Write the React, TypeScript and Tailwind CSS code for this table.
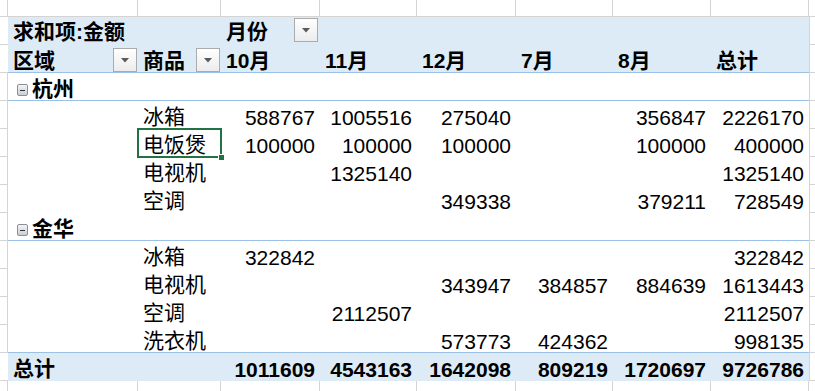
import React from "react";

const COLS = "grid grid-cols-[8px_130px_83px_99px_97px_99px_97px_98px_98px_1fr]";
const FONT = { fontFamily: '"Liberation Sans", "Noto Sans CJK SC", sans-serif' };

function DropBtn() {
  return (
    <div className="w-[24px] h-[24px] border border-[#ababab] bg-gradient-to-b from-white to-[#ececec] flex items-center justify-center shrink-0">
      <svg width="8" height="5" viewBox="0 0 8 5">
        <path d="M0 0 H8 L4 4.5 Z" fill="#595959" />
      </svg>
    </div>
  );
}

function Collapse() {
  return (
    <div className="w-[11px] h-[12px] rounded-[2px] border border-[#8a8f96] bg-gradient-to-b from-[#f4f5f7] to-[#c9ced6] flex items-center justify-center mr-[4px] mt-[11px] shrink-0">
      <div className="w-[5px] h-[1px] bg-[#333]" />
    </div>
  );
}

function Num({ v, bold }: { v: string; bold?: boolean }) {
  return (
    <div className={"h-full text-right pr-[5px] pt-[4px] leading-[26px] whitespace-nowrap " + (bold ? "font-bold" : "")}>
      {v}
    </div>
  );
}

type BodyRow = {
  kind: "region" | "item";
  label: string;
  vals?: string[];
  line?: boolean;
  selected?: boolean;
};

const body: BodyRow[] = [
  { kind: "region", label: "杭州", line: true },
  { kind: "item", label: "冰箱", vals: ["588767", "1005516", "275040", "", "356847", "2226170"] },
  { kind: "item", label: "电饭煲", vals: ["100000", "100000", "100000", "", "100000", "400000"], selected: true },
  { kind: "item", label: "电视机", vals: ["", "1325140", "", "", "", "1325140"] },
  { kind: "item", label: "空调", vals: ["", "", "349338", "", "379211", "728549"] },
  { kind: "region", label: "金华", line: true },
  { kind: "item", label: "冰箱", vals: ["322842", "", "", "", "", "322842"] },
  { kind: "item", label: "电视机", vals: ["", "", "343947", "384857", "884639", "1613443"] },
  { kind: "item", label: "空调", vals: ["", "2112507", "", "", "", "2112507"] },
  { kind: "item", label: "洗衣机", vals: ["", "", "573773", "424362", "", "998135"], line: true },
];

export default function App() {
  return (
    <div className="w-[815px] h-[391px] overflow-hidden bg-white text-[21px] text-black leading-[28px]" style={FONT}>
      {/* top grid row */}
      <div className={COLS + " grid-rows-[17px] h-[17px]"}>
        {Array.from({ length: 10 }).map((_, i) => (
          <div key={i} className={"border-b border-[#d4d4d4] " + (i < 9 ? "border-r" : "")} />
        ))}
      </div>

      {/* header row 1 */}
      <div className={COLS + " grid-rows-[28px] h-[28px]"}>
        <div className="border-b border-[#d4d4d4]" />
        <div className="col-span-2 bg-[#ddebf7] font-bold pl-[5px] pt-[2px] leading-[26px] whitespace-nowrap">求和项:金额</div>
        <div className="bg-[#ddebf7] font-bold flex items-start justify-between pl-[5px] pr-[2px] pt-[1px]">
          <span className="mt-[1px] leading-[26px]">月份</span>
          <DropBtn />
        </div>
        <div className="col-span-5 bg-[#ddebf7]" />
        <div className="border-l border-b border-[#d4d4d4]" />
      </div>

      {/* header row 2 */}
      <div className={COLS + " grid-rows-[28px] h-[28px]"}>
        <div className="border-b border-[#d4d4d4]" />
        <div className="bg-[#ddebf7] border-b border-[#9bc2e6] font-bold flex items-start justify-between pl-[5px] pr-[1px] pt-[3px]">
          <span className="mt-[1px] leading-[24px]">区域</span>
          <DropBtn />
        </div>
        <div className="bg-[#ddebf7] border-b border-[#9bc2e6] font-bold flex items-start justify-between pl-[5px] pr-[1px] pt-[3px]">
          <span className="mt-[1px] leading-[24px]">商品</span>
          <DropBtn />
        </div>
        {["10月", "11月", "12月", "7月", "8月", "总计"].map((m, i) => (
          <div key={i} className="bg-[#ddebf7] border-b border-[#9bc2e6] font-bold pl-[5px] leading-[24px] pt-[4px] whitespace-nowrap">
            {m}
          </div>
        ))}
        <div className="border-l border-b border-[#d4d4d4]" />
      </div>

      {/* body rows */}
      {body.map((r, ri) => (
        <div key={ri} className={COLS + " grid-rows-[28px] h-[28px]"}>
          <div className="border-b border-[#d4d4d4] border-r" />
          {r.kind === "region" ? (
            <div className={"col-span-8 bg-white flex items-start pl-[9px] font-bold " + (r.line ? "border-b border-[#9bc2e6]" : "")}>
              <Collapse />
              <span className="pt-[2px] leading-[27px]">{r.label}</span>
            </div>
          ) : (
            <>
              <div className={"bg-white " + (r.line ? "border-b border-[#9bc2e6]" : "")} />
              <div className={"relative bg-white pl-[5px] pt-[2px] leading-[27px] whitespace-nowrap " + (r.line ? "border-b border-[#9bc2e6]" : "")}>
                {r.label}
                {r.selected && (
                  <>
                    <div className="absolute z-10 -left-[1px] -top-[1px] -right-[1px] -bottom-[1px] border-2 border-[#217346]" />
                    <div className="absolute z-20 -right-[4px] -bottom-[4px] w-[7px] h-[7px] bg-[#217346] border border-white" />
                  </>
                )}
              </div>
              {r.vals!.map((v, vi) => (
                <div key={vi} className={"bg-white " + (r.line ? "border-b border-[#9bc2e6]" : "")}>
                  <Num v={v} />
                </div>
              ))}
            </>
          )}
          <div className="border-l border-b border-[#d4d4d4]" />
        </div>
      ))}

      {/* total row */}
      <div className={COLS + " grid-rows-[28px] h-[28px]"}>
        <div className="border-b border-[#d4d4d4]" />
        <div className="col-span-2 bg-[#ddebf7] font-bold pl-[5px] pt-[3px] leading-[26px]">总计</div>
        {["1011609", "4543163", "1642098", "809219", "1720697", "9726786"].map((v, i) => (
          <div key={i} className="bg-[#ddebf7]">
            <Num v={v} bold />
          </div>
        ))}
        <div className="border-l border-b border-[#d4d4d4]" />
      </div>

      {/* bottom grid row */}
      <div className={COLS + " grid-rows-[20px] h-[20px]"}>
        {Array.from({ length: 10 }).map((_, i) => (
          <div key={i} className={"border-b border-[#d4d4d4] " + (i < 9 ? "border-r" : "")} />
        ))}
      </div>
    </div>
  );
}
